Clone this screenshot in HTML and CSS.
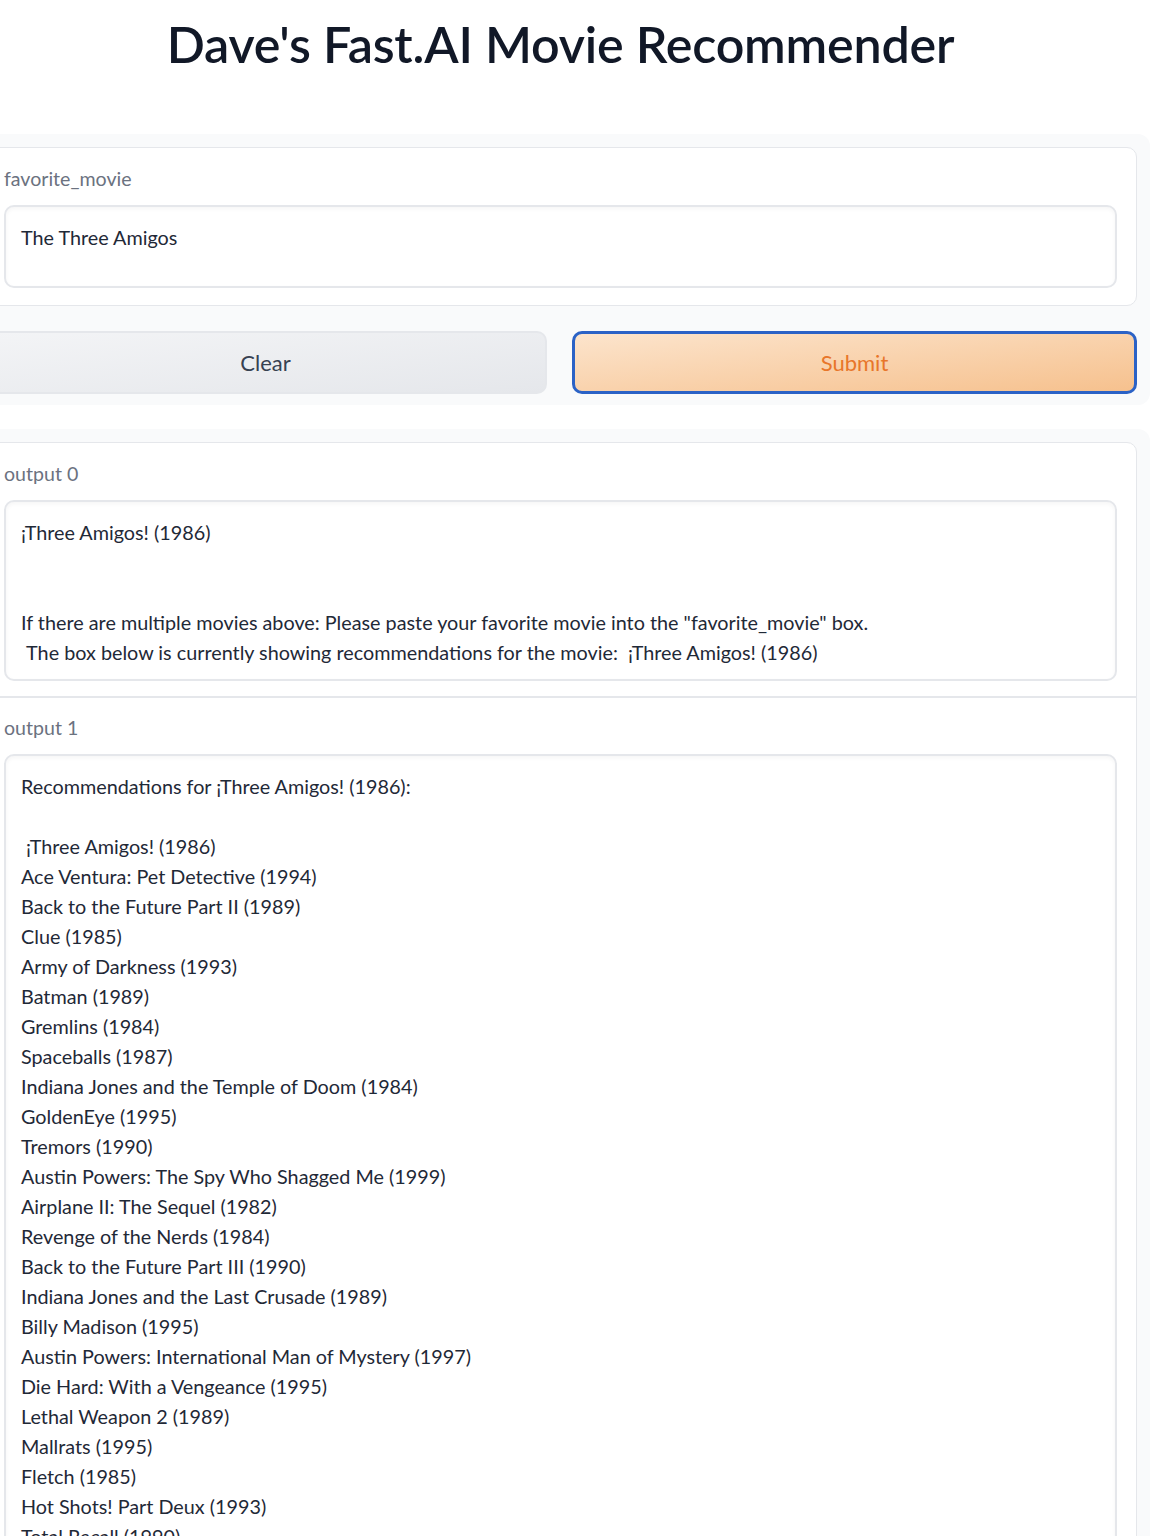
FILE: index.html
```html
<!DOCTYPE html>
<html>
<head>
<meta charset="utf-8">
<link rel="stylesheet" href="styles.css">
</head>
<body>
<div class="app">
  <h1 class="title">Dave's Fast.AI Movie Recommender</h1>

  <div class="panel">
    <div class="box">
      <div class="block">
        <div class="label">favorite_movie</div>
        <div class="field field-input">The Three Amigos</div>
      </div>
    </div>
    <div class="buttons">
      <button class="btn btn-clear">Clear</button>
      <button class="btn btn-submit">Submit</button>
    </div>
  </div>

  <div class="panel panel-out">
    <div class="box">
      <div class="block block-first">
        <div class="label">output 0</div>
        <div class="field field-out0">¡Three Amigos! (1986)


If there are multiple movies above: Please paste your favorite movie into the "favorite_movie" box.
 The box below is currently showing recommendations for the movie:  ¡Three Amigos! (1986)</div>
      </div>
      <div class="block block-sep">
        <div class="label">output 1</div>
        <div class="field field-out1">Recommendations for ¡Three Amigos! (1986):

 ¡Three Amigos! (1986)
Ace Ventura: Pet Detective (1994)
Back to the Future Part II (1989)
Clue (1985)
Army of Darkness (1993)
Batman (1989)
Gremlins (1984)
Spaceballs (1987)
Indiana Jones and the Temple of Doom (1984)
GoldenEye (1995)
Tremors (1990)
Austin Powers: The Spy Who Shagged Me (1999)
Airplane II: The Sequel (1982)
Revenge of the Nerds (1984)
Back to the Future Part III (1990)
Indiana Jones and the Last Crusade (1989)
Billy Madison (1995)
Austin Powers: International Man of Mystery (1997)
Die Hard: With a Vengeance (1995)
Lethal Weapon 2 (1989)
Mallrats (1995)
Fletch (1985)
Hot Shots! Part Deux (1993)
Total Recall (1990)
Wayne's World (1992)
Ghostbusters (1984)</div>
      </div>
    </div>
  </div>
</div>
</body>
</html>
```
FILE: styles.css
```css
html, body {
  margin: 0;
  padding: 0;
  background: #ffffff;
  overflow: hidden;
}

body {
  font-family: "Lato", "Noto Sans", sans-serif;
  color: #1f2937;
}

.app {
  width: 1179px;
  margin-left: -29px;
  display: flex;
  flex-direction: column;
  gap: 24px;
}

.title {
  margin: 0;
  height: 86px;
  padding-bottom: 24px;
  display: flex;
  align-items: center;
  justify-content: center;
  font-size: 50.2px;
  font-weight: 600;
  color: #111827;
  letter-spacing: -0.2px;
}

.panel {
  background: #f9fafb;
  border-radius: 12px;
  padding: 13px 13px 11px 13px;
  display: flex;
  flex-direction: column;
  gap: 25px;
}

.panel-out {
  padding-bottom: 0;
}

.box {
  background: #ffffff;
  border: 1px solid #e5e7eb;
  border-radius: 10px;
  display: flex;
  flex-direction: column;
}

.block {
  padding: 19px 19px 17px 19px;
  display: flex;
  flex-direction: column;
  gap: 14px;
}

.block-first {
  padding-bottom: 15px;
}

.block-sep {
  border-top: 2px solid #e5e7eb;
  padding-top: 18px;
}

.label {
  font-size: 19.6px;
  line-height: 24px;
  color: #6b7280;
}

.field {
  border: 2px solid #e5e7eb;
  border-radius: 10px;
  background: #ffffff;
  padding: 15px 15px 12px 15px;
  font-size: 19.8px;
  line-height: 30px;
  color: #1f2937;
  white-space: pre-wrap;
  box-shadow: inset 0 2px 4px rgba(0, 0, 0, 0.04);
}

.field-input {
  height: 52px;
}

.buttons {
  display: flex;
  gap: 25px;
}

.btn {
  flex: 1;
  height: 63px;
  border-radius: 10px;
  font-family: "Lato", "Noto Sans", sans-serif;
  font-size: 22px;
  cursor: pointer;
}

.btn-clear {
  background: linear-gradient(to bottom right, #f3f4f6, #e5e7eb);
  border: 2px solid #e5e7eb;
  color: #374151;
}

.btn-submit {
  background: linear-gradient(to bottom right, #fce4cc, #f6c18e);
  border: 3px solid #2b62c6;
  color: #e8762a;
}
```
